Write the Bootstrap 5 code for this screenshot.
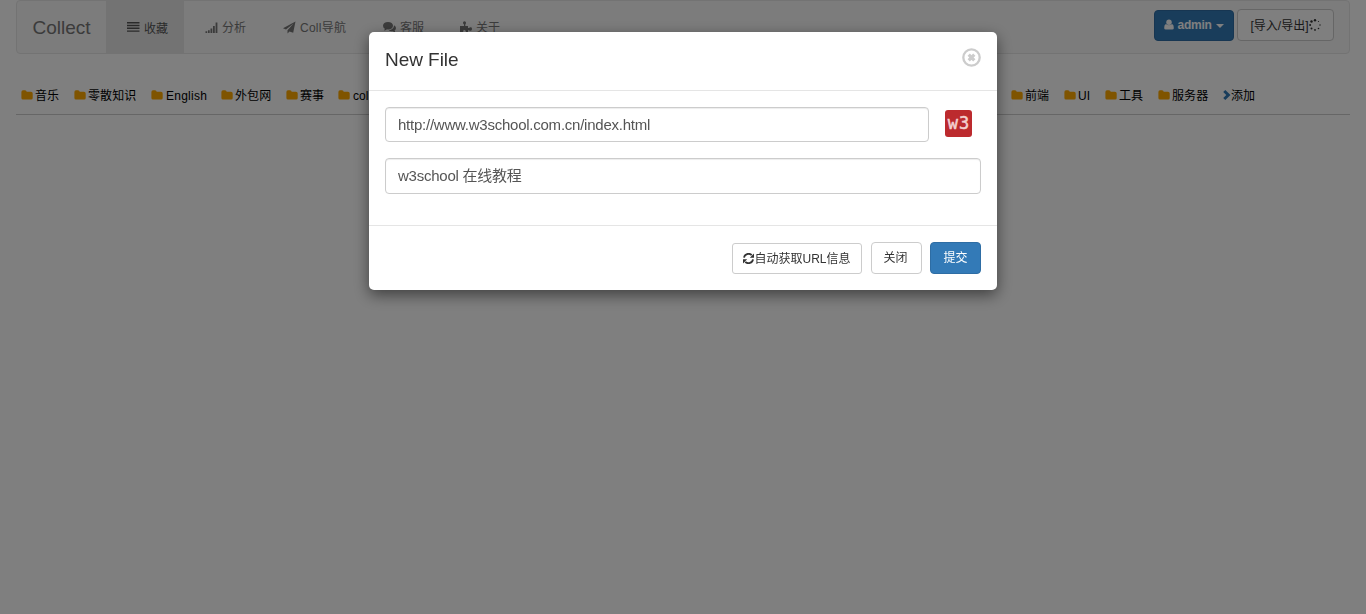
<!DOCTYPE html>
<html lang="zh-CN">
<head>
<meta charset="utf-8">
<title>Collect</title>
<link rel="stylesheet" href="https://cdn.jsdelivr.net/npm/bootstrap@5.3.0/dist/css/bootstrap.min.css">
<style>
body{font:12px/18px "Liberation Sans","Noto Sans CJK SC",sans-serif;color:#000;height:614px;overflow:hidden}
svg{fill:currentColor;display:block;flex:none}
.top-bar{height:54px;margin:0 16px;padding:0;background:#f8f8f8;border:1px solid #e7e7e7;border-radius:4px;color:#777}
.top-bar .navbar-brand{font-size:19px;line-height:54px;height:52px;width:89px;margin:0;padding:0 0 0 15.5px;color:#777}
.top-bar .navbar-nav .nav-link{height:52px;color:#777;padding:0 0 0 21px;gap:4px;font-size:12px}
.top-bar .navbar-nav .nav-link.active{background:#e7e7e7;color:#555}
.btn{font-size:12px;line-height:18px;border-radius:4px;padding:0;display:flex;align-items:center;justify-content:center}
.btn-primary{background:#337ab7;border-color:#2e6da4}
.btn-plain{background:#fff;border:1px solid #ccc;color:#333}
.folder-bar{margin:32px 16px 0;height:29px;border-bottom:1px solid #ccc;white-space:nowrap}
.folder-bar a{color:#000;text-decoration:none;display:flex;height:18px;align-items:center;gap:2px}
.folder-bar span{padding-top:1px;letter-spacing:.1px}
.folder-bar svg{color:#ffa800;margin-top:-1px}
.modal-backdrop{--bs-backdrop-opacity:.5}
.modal-dialog{width:628px;max-width:none;margin:32px 0 0 369px}
.modal-content{height:258px;border:0;border-radius:5px;box-shadow:0 5px 15px rgba(0,0,0,.5);color:#333}
.modal-header{height:59px;padding:0 16px;border-color:#e5e5e5}
.modal-title{font-size:19px;line-height:20px;font-weight:400;letter-spacing:-.05px;margin-top:-2px}
.modal-body{padding:16px}
.modal-footer{height:65px;padding:0 16px;border-color:#e5e5e5;gap:0}
.modal-footer>*{margin:0}
.form-control{height:36px;font-size:15px;line-height:20px;letter-spacing:-.24px;color:#555;border-color:#ccc;border-radius:4px;padding:6px 12px;box-shadow:inset 0 1px 1px rgba(0,0,0,.075)}
.form-control.site-name{padding:4px 12px 8px}
.site-icon{width:27px;height:27px;background:#bc2a2e;border-radius:3px;color:#f3d0d0;font:17px/26px "DejaVu Sans Mono",monospace;letter-spacing:1px;padding-left:1px;-webkit-text-stroke:.5px}
</style>
</head>
<body>
<svg width="0" height="0" class="position-absolute"><defs>
<symbol id="folder" viewBox="0 0 12 10"><path d="M.4 2Q.4.300 2 .3h2q1.500 0 1.700 1.500H10q1.700 0 1.700 1.700V8q0 1.500-1.500 1.500H1.900Q.4 9.500.4 8z"/></symbol>
</defs></svg>
<nav class="navbar navbar-expand top-bar align-items-start">
<a class="navbar-brand">Collect</a>
<div class="navbar-nav">
<a class="nav-link active d-flex align-items-center" style="width:78px"><svg width="13" height="10" viewBox="0 0 13 10"><path d="M0 0h12.500v1.400H0zM0 2.800h12.500v1.400H0zM0 5.600h12.500V7H0zM0 8.400h12.500v1.400H0z"/></svg><span class="pt-1 mt-n1">收藏</span></a>
<a class="nav-link d-flex align-items-center" style="width:78px"><svg width="13" height="11" viewBox="0 0 13 11"><path d="M.5 9.300h1.700V11H.5zM3 8.300h1.700V11H3zM5.500 6.500h1.800V11H5.500zM8 4h1.800v7H8zM10.600.5h1.800V11h-1.800z"/></svg><span style="padding-top:2px">分析</span></a>
<a class="nav-link d-flex align-items-center" style="width:100px;letter-spacing:.25px"><svg width="13" height="13" viewBox="0 0 13 13"><path d="M12.500.5 0 7.200l3 1.400L10.500 2.500 4.500 9.200v3.300l2-2 3.700 1.300z"/></svg><span style="padding-top:2px">Coll导航</span></a>
<a class="nav-link d-flex align-items-center" style="width:77px"><svg width="13" height="11" viewBox="0 0 13 11"><path d="M5 0c3 0 5 1.600 5 3.700S8 7.400 5 7.400l-1-.1Q2.500 8.500.8 8.500q1-.8 1-1.800Q0 5.600 0 3.700C0 1.600 2 0 5 0M11 3.300q2 1 2 2.700 0 1.500-1.400 2.500.1.900 1 1.900-1.600-.1-2.900-1.200-2.500.3-4-.9Q11 7.500 11 3.300"/></svg><span style="padding-top:2px">客服</span></a>
<a class="nav-link d-flex align-items-center"><svg width="12" height="12" viewBox="0 0 12 12"><path d="M0 5h4V3.500Q3 2.800 3 1.800 3 .3 4.500.3T6 1.800q0 1-.7 1.700V5H8v2q.7.300 1.300-.3Q10 6 11 6.300T12 8t-1 1.700-1.700-.3Q8.700 9 8 9.200V12H5.500q-.3-.7.300-1.300T5 9.200t-1.500 0-.4 1.500.3 1.300H0z"/></svg><span style="padding-top:2px">关于</span></a>
</div>
<div class="d-flex ms-auto" style="padding:8px 15px 0 0;gap:3px">
<button class="btn btn-primary fw-bold" style="width:80px;height:31px;margin-top:1px;padding-bottom:2px"><svg width="10" height="11" viewBox="0 0 11 11" style="margin-right:3px"><circle cx="5.500" cy="3" r="3"/><path d="M2 5q3.500 2.400 7 0 2 1 1.800 4.500Q10.700 11 9 11H2Q.3 11 .2 9.500 0 6 2 5"/></svg><span style="letter-spacing:-.25px">admin</span><svg width="8" height="4" style="margin:2px 0 0 4px"><path d="M0 0h8L4 4z"/></svg></button>
<button class="btn btn-plain" style="width:97px;height:32px"><span style="padding-top:1px">[导入/导出]</span><svg width="12" height="12" viewBox="0 0 12 12"><g><circle cx="6" cy="1.200" r="1.200"/><circle cx="9.500" cy="2.500" r=".6"/><circle cx="11" cy="6" r=".7"/><circle cx="9.500" cy="9.500" r=".8"/><circle cx="6" cy="10.900" r=".9"/><circle cx="2.500" cy="9.500" r="1"/><circle cx="1.100" cy="6" r="1"/><circle cx="2.500" cy="2.500" r="1.200"/></g></svg></button>
</div>
</nav>
<div class="folder-bar d-flex">
<a style="width:53px;margin-left:5px"><svg width="12" height="10"><use href="#folder"/></svg><span>音乐</span></a>
<a style="width:77px"><svg width="12" height="10"><use href="#folder"/></svg><span>零散知识</span></a>
<a style="width:70px"><svg width="12" height="10"><use href="#folder"/></svg><span style="margin-left:1px;letter-spacing:.25px">English</span></a>
<a style="width:65px"><svg width="12" height="10"><use href="#folder"/></svg><span>外包网</span></a>
<a style="width:52px"><svg width="12" height="10"><use href="#folder"/></svg><span>赛事</span></a>
<a style="width:673px"><svg width="12" height="10"><use href="#folder"/></svg><span style="margin-left:1px">coll</span></a>
<a style="width:53px"><svg width="12" height="10"><use href="#folder"/></svg><span>前端</span></a>
<a style="width:41px"><svg width="12" height="10"><use href="#folder"/></svg><span>UI</span></a>
<a style="width:53px"><svg width="12" height="10"><use href="#folder"/></svg><span>工具</span></a>
<a style="width:65px"><svg width="12" height="10"><use href="#folder"/></svg><span>服务器</span></a>
<a class="gap-0"><svg width="8" height="10" viewBox="0 0 8 10" style="color:#337ab7"><path d="M2.300 0 7.500 5l-5.200 5L.2 8.100 3.300 5 .2 1.900z"/></svg><span>添加</span></a>
</div>
<div class="modal-backdrop show"></div>
<div class="modal d-block overflow-hidden">
<div class="modal-dialog">
<div class="modal-content">
<div class="modal-header"><h4 class="modal-title">New File</h4>
<svg width="19" height="19" viewBox="0 0 19 19" style="color:#ccc;margin-top:-8px"><circle cx="9.500" cy="9.500" r="8.200" fill="none" stroke="currentColor" stroke-width="2.300"/><path d="m6.700 6.700 5.600 5.600m0-5.600-5.600 5.600" stroke="currentColor" stroke-width="3.200"/></svg></div>
<div class="modal-body">
<div class="d-flex"><input class="form-control" style="width:544px;height:35px" value="http://www.w3school.com.cn/index.html"><div class="site-icon text-center ms-3" style="margin-top:3px">w3</div></div>
<input class="form-control site-name mt-3" value="w3school 在线教程">
</div>
<div class="modal-footer">
<button class="btn btn-plain" style="width:130px;height:31px;margin:1px 9px 0 0;border-radius:3px"><svg width="11" height="11" viewBox="0 0 11 11"><path d="M1 4.700A4.500 4.500 0 0 1 8.700 2.200M10 6.300A4.500 4.500 0 0 1 2.300 8.800" fill="none" stroke="currentColor" stroke-width="1.800"/><path d="M11 .5v4.200H6.800zM0 10.500V6.300h4.200z"/></svg>自动获取URL信息</button>
<button class="btn btn-plain" style="width:51px;height:32px;margin-right:8px;padding-right:2px">关闭</button>
<button class="btn btn-primary" style="width:51px;height:32px">提交</button>
</div>
</div>
</div>
</div>
<script src="https://cdn.jsdelivr.net/npm/bootstrap@5.3.0/dist/js/bootstrap.bundle.min.js"></script>
</body>
</html>
